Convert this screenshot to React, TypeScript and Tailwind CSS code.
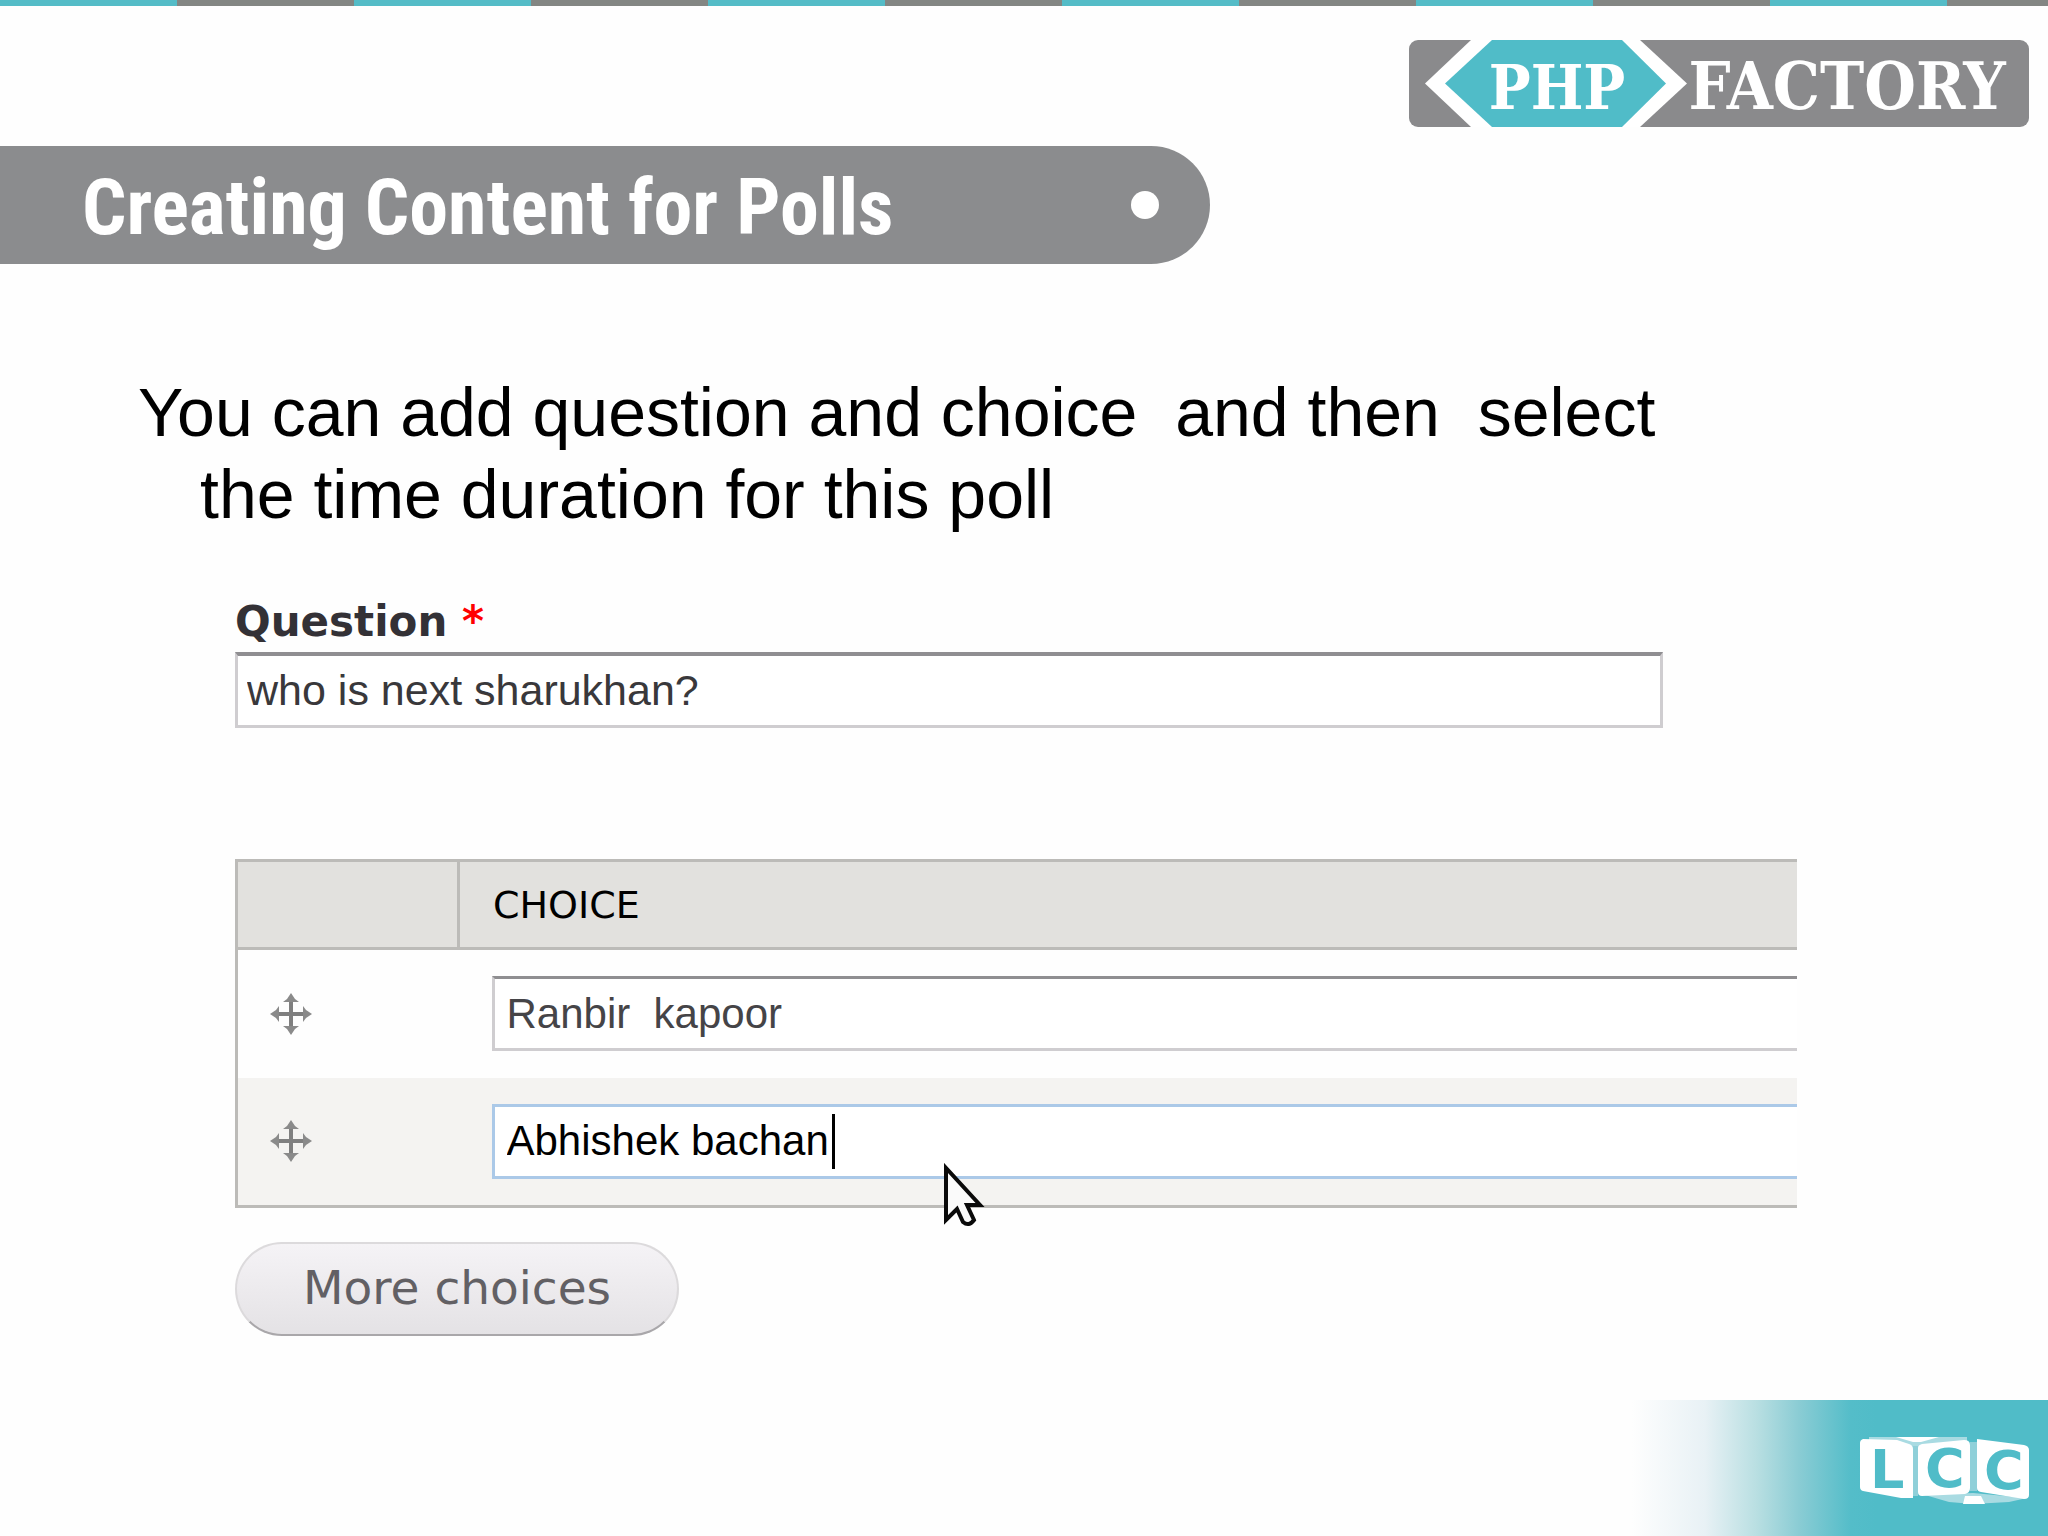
import React from "react";

const STRIPES = Array.from({ length: 12 }, (_, i) => i);

function PhpFactoryLogo() {
  return (
    <svg viewBox="0 0 620 87" className="h-[87px] w-[620px] overflow-visible" role="img" aria-label="PHP Factory">
      <rect width="620" height="87" rx="9" fill="#8a8a8c" />
      <path d="M62 0H231L278 43.500L231 87H62L16 43.500Z" fill="#ffffff" />
      <path d="M83 0H213L257 43.500L213 87H83L36 43.500Z" fill="#50bcc8" />
      <g fill="#ffffff" fontWeight="700" fontFamily="'DejaVu Serif Condensed', 'DejaVu Serif', serif" textAnchor="middle">
        <text x="148" y="69" fontSize="62">PHP</text>
        <text x="438" y="69" fontSize="66">FACTORY</text>
      </g>
    </svg>
  );
}

function LccLogo() {
  return (
    <svg viewBox="0 0 171 68" className="h-[68px] w-[171px] overflow-visible" role="img" aria-label="LCC">
      <path d="M10 1H108V5L80 7L60 12L40 6L10 4Z" fill="#a9dbe2" />
      <path d="M37 1H80L62 6H54Z" fill="#ffffff" />
      <path d="M66 59L114 57L168 62L150 66L114 68L90 66Z" fill="#a9dbe2" />
      <path d="M106 60H122L126 68H104Z" fill="#ffffff" />
      <path d="M53 10H59V60H53ZM111 6H118V55H111Z" fill="#8fd0d9" />
      <path d="M4 3L38 4L50 8Q54 9 54 13V62H42L4 55Q1 54 1 51V7Q1 4 4 3Z" fill="#ffffff" />
      <path d="M63 8L105 4Q111 4 111 9V52Q111 57 106 58L63 60Q59 60 59 56V12Q59 9 63 8Z" fill="#ffffff" />
      <path d="M118 3L165 9Q170 10 170 14V59Q170 63 165 63L122 56Q118 55 118 52Z" fill="#ffffff" />
      <g fill="#50bcc8" fontFamily="'DejaVu Sans', sans-serif" fontWeight="700" fontSize="54">
        <text x="11" y="52">L</text>
        <text x="66" y="51">C</text>
        <text x="125" y="53">C</text>
      </g>
    </svg>
  );
}

function MoveIcon() {
  return (
    <svg viewBox="0 0 42 42" className="size-[42px]" aria-hidden="true">
      <path d="M21 3V39M3 21H39" stroke="#7f7f7f" strokeWidth="4" fill="none" />
      <path d="M21 0L25 6L29 9H13L17 6ZM21 42L25 36L29 33H13L17 36ZM0 21L6 17L9 13V29L6 25ZM42 21L36 17L33 13V29L36 25Z" fill="#8a8a8a" />
    </svg>
  );
}

function Cursor() {
  return (
    <svg viewBox="0 0 42 64" className="h-[64px] w-[42px]" aria-hidden="true">
      <path d="M3 5V57L14 46L20 59Q26 64 31 57L24 42H37Z" fill="#fafafa" stroke="#0a0a0a" strokeWidth="4" />
    </svg>
  );
}

const choices = [
  { value: "Ranbir  kapoor", active: false },
  { value: "Abhishek bachan", active: true },
];

export default function App() {
  return (
    <div className="flex min-h-screen flex-col overflow-hidden bg-[#fefefe] font-['Liberation_Sans',sans-serif]">
      <div className="flex h-1.5 shrink-0 overflow-hidden">
        {STRIPES.map((i) => (
          <div key={i} className={i % 2 === 0 ? "w-[177px] shrink-0 bg-[#54bcc7]" : "w-[177px] shrink-0 bg-[#838683]"} />
        ))}
      </div>

      <header className="flex flex-col">
        <div className="flex justify-end pt-[34px] pr-[19px]">
          <PhpFactoryLogo />
        </div>
        <div className="mt-[19px] flex h-[118px] w-[1210px] items-center justify-between rounded-r-full bg-[#8b8c8e] pr-[51px] pl-[82px]">
          <h1 className="pt-1.5 font-['Roboto_Condensed','Liberation_Sans',sans-serif] text-[78px] leading-none font-bold whitespace-nowrap text-white">
            Creating Content for Polls
          </h1>
          <span className="size-7 rounded-full bg-white" />
        </div>
      </header>

      <main className="flex flex-col">
        <p className="mt-[107px] pr-72 pl-[200px] -indent-[62px] text-[68px] leading-[82px] whitespace-pre-wrap text-black">
          {"You can add question and choice  and then  select the time duration for this poll"}
        </p>

        <form className="mt-[59px] flex flex-col pr-[251px] pl-[235px]" onSubmit={(e) => e.preventDefault()}>
          <label htmlFor="question" className="pb-0.5 font-['DejaVu_Sans',sans-serif] text-[42px] leading-[56px] font-bold text-[#333136]">
            Question <span className="text-[#ff0000]">*</span>
          </label>
          <input
            id="question"
            type="text"
            defaultValue="who is next sharukhan?"
            className="mr-[134px] h-[76px] border-3 border-t-4 border-[#cfcdd0] border-t-[#8f8e91] bg-white px-[9px] text-[43px] text-[#39383b] outline-none"
          />

          <table className="mt-[131px] w-full border-collapse">
            <thead>
              <tr className="h-[88px] border-y-3 border-[#bcbbb8] bg-[#e2e1de]">
                <th className="w-[222px] border-x-3 border-[#bcbbb8]" aria-label="Reorder" />
                <th className="pl-[33px] text-left font-['DejaVu_Sans',sans-serif] text-[38px] leading-none font-normal text-black">
                  CHOICE
                </th>
              </tr>
            </thead>
            <tbody>
              {choices.map((c) => (
                <tr key={c.value} className="h-[129px] border-l-3 border-[#bcbbb8] last:border-b-3 even:bg-[#f4f3f1]">
                  <td className="pl-8">
                    <MoveIcon />
                  </td>
                  <td className="relative pl-[33px]">
                    <input
                      type="text"
                      aria-label="Choice"
                      defaultValue={c.value}
                      className={
                        c.active
                          ? "block h-[75px] w-full border-3 border-r-0 border-[#abc9e8] bg-white px-3 text-[42px] text-black outline-none"
                          : "block h-[75px] w-full border-3 border-r-0 border-[#cfcdd0] border-t-[#8f8e91] bg-white px-3 text-[42px] text-[#454447] outline-none"
                      }
                    />
                    {c.active && (
                      <>
                        <span className="absolute top-9 left-[373px] h-[55px] w-[3px] bg-black" />
                        <span className="absolute top-[85px] left-[484px]">
                          <Cursor />
                        </span>
                      </>
                    )}
                  </td>
                </tr>
              ))}
            </tbody>
          </table>

          <button
            type="button"
            className="mt-[34px] h-[94px] w-[444px] rounded-full border-2 border-[#dcdadc] border-b-[#a9a7aa] bg-linear-to-b from-[#f5f3f6] to-[#e4e2e5] pb-1 font-['DejaVu_Sans',sans-serif] text-[47px] leading-none text-[#626064]"
          >
            More choices
          </button>
        </form>
      </main>

      <footer className="mt-auto flex h-[136px] items-center justify-end self-end bg-[linear-gradient(90deg,#fefefe_3%,#e8f1f5_20%,#b9dfe2_32%,#8accd4_42%,#54bdc9_54%,#50bcc8_60%)] pt-1 pl-60">
        <div className="pr-[18px]">
          <LccLogo />
        </div>
      </footer>
    </div>
  );
}
